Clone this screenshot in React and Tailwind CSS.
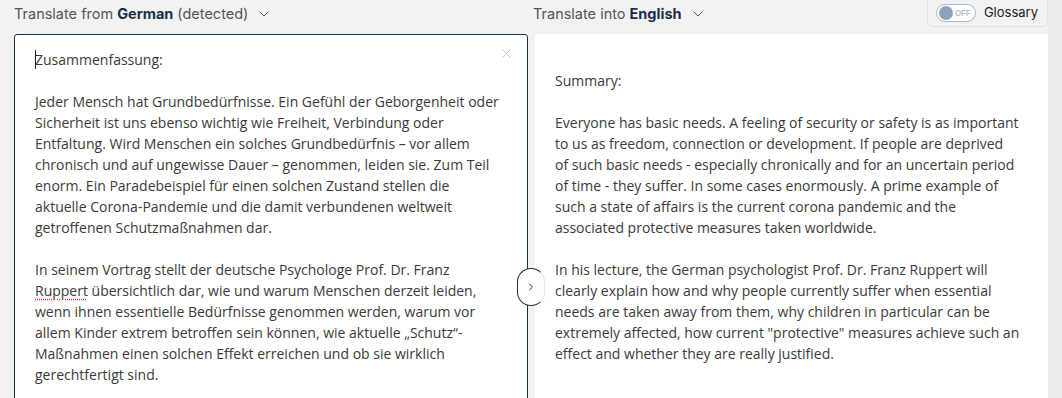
import { ChevronDown, ChevronRight, X } from 'lucide-react';

const headerFont = { fontFamily: 'Inter, "Noto Sans", sans-serif' };
const bodyFont = { fontFamily: '"Open Sans", "Noto Sans", sans-serif' };

const LanguagePicker = ({ label, lang, note }) => (
  <div className="flex items-center gap-1 text-[14.5px] text-[#555]" style={headerFont}>
    <span>{label}</span>
    <span className="font-bold text-[#1b2f4a]">{lang}</span>
    {note && <span>{note}</span>}
    <ChevronDown className="ml-1 h-4 w-4 text-[#555]" strokeWidth={1.5} />
  </div>
);

// Lines as the translation box breaks them
const summaryLines = [
  [
    'Everyone has basic needs. A feeling of security or safety is as important',
    'to us as freedom, connection or development. If people are deprived',
    'of such basic needs - especially chronically and for an uncertain period',
    'of time - they suffer. In some cases enormously. A prime example of',
    'such a state of affairs is the current corona pandemic and the',
    'associated protective measures taken worldwide.',
  ],
  [
    'In his lecture, the German psychologist Prof. Dr. Franz Ruppert will',
    'clearly explain how and why people currently suffer when essential',
    'needs are taken away from them, why children in particular can be',
    'extremely affected, how current "protective" measures achieve such an',
    'effect and whether they are really justified.',
  ],
];

const App = () => {
  return (
    <div className="flex h-[398px] w-[1062px] overflow-hidden bg-[#f2f2f2]">
      <div className="flex flex-1 flex-col pl-[14px]">
        {/* Header row */}
        <div className="flex h-[34px] shrink-0">
          <div className="flex w-[519px] items-start pt-[3px]">
            <LanguagePicker label="Translate from" lang="German" note="(detected)" />
          </div>
          <div className="flex flex-1 items-start justify-between pt-[3px]">
            <LanguagePicker label="Translate into" lang="English" />
            <div className="-mt-[3px] flex h-[27px] items-center gap-2 rounded-b-md border border-t-0 border-[#e2e2e2] pl-[8px] pr-[9px]" style={headerFont}>
              <div className="relative flex h-[18px] w-[40px] items-center rounded-full border border-[#a8b8c8] bg-white">
                <span className="absolute left-[2px] h-[14px] w-[14px] rounded-full bg-[#8ea3b8]" />
                <span className="ml-[18px] text-[8px] font-semibold text-[#b0bccb]">OFF</span>
              </div>
              <span className="text-[13px] text-[#222]">Glossary</span>
            </div>
          </div>
        </div>

        {/* Panels */}
        <div className="relative flex flex-1 gap-[7px]" style={bodyFont}>
          <div className="relative h-[420px] w-[514px] rounded-t-[3px] border border-[#1b2f4a] bg-white pl-5 pr-7 pt-[11px] text-[14px] leading-[21px] text-[#3a3a3a]">
            <X className="absolute right-[13px] top-[11px] h-[15px] w-[15px] text-[#c4c4c4]" strokeWidth={1.5} />
            <p>
              <span className="-mr-px inline-block h-[19px] w-px translate-y-[4px] bg-[#222]" />
              Zusammenfassung:
            </p>
            <p className="mt-[21px]">
              Jeder Mensch hat Grundbedürfnisse. Ein Gefühl der Geborgenheit oder Sicherheit ist uns ebenso wichtig wie Freiheit, Verbindung oder Entfaltung. Wird Menschen ein solches Grundbedürfnis – vor allem chronisch und auf ungewisse Dauer – genommen, leiden sie. Zum Teil enorm. Ein Paradebeispiel für einen solchen Zustand stellen die aktuelle Corona-Pandemie und die damit verbundenen weltweit getroffenen Schutzmaßnahmen dar.
            </p>
            <p className="mt-[21px]">
              In seinem Vortrag stellt der deutsche Psychologe Prof. Dr. Franz{' '}
              <span className="underline decoration-red-500 decoration-dotted underline-offset-[3px]">Ruppert</span>{' '}
              übersichtlich dar, wie und warum Menschen derzeit leiden, wenn ihnen essentielle Bedürfnisse genommen werden, warum vor allem Kinder extrem betroffen sein können, wie aktuelle „Schutz“-Maßnahmen einen solchen Effekt erreichen und ob sie wirklich gerechtfertigt sind.
            </p>
          </div>

          <div className="h-[420px] w-[513px] rounded-t-[3px] bg-white pl-5 pr-2 pt-[36px] text-[14px] leading-[21px] text-[#3a3a3a]">
            <p>Summary:</p>
            {summaryLines.map((para, i) => (
              <p key={i} className="mt-[21px]">
                {para.map((line) => (
                  <span key={line} className="block whitespace-nowrap">{line}</span>
                ))}
              </p>
            ))}
          </div>

          {/* Expand button over the divider */}
          <button className="absolute left-[503px] top-[234px] flex h-[38px] w-[28px] items-center justify-center rounded-full border border-[#1b2f4a] border-r-[#e6e6e6] bg-white">
            <ChevronRight className="h-3 w-3 text-[#1b2f4a]" strokeWidth={2} />
          </button>
        </div>
      </div>
      <div className="w-[14px] shrink-0 bg-[#ebebeb]" />
    </div>
  );
};

export default App;
